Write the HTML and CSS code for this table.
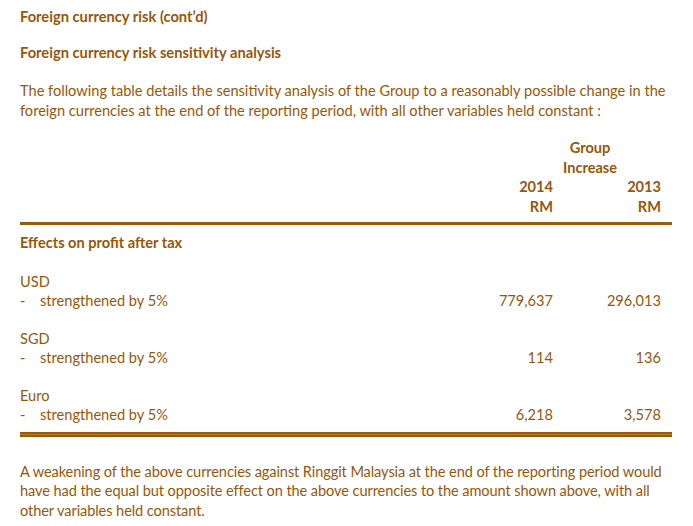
FILE: index.html
```html
<!DOCTYPE html>
<html>
<head>
<meta charset="utf-8">
<link rel="stylesheet" href="styles.css">
</head>
<body>
<div class="page">
  <h1 class="title">Foreign currency risk (cont’d)</h1>
  <h2 class="subtitle">Foreign currency risk sensitivity analysis</h2>
  <p class="para intro">The following table details the sensitivity analysis of the Group to a reasonably possible change in the<br>foreign currencies at the end of the reporting period, with all other variables held constant :</p>

  <div class="table">
    <div class="head">
      <div class="group">Group<br>Increase</div>
      <div class="c2 b">2014<br>RM</div>
      <div class="c3 b">2013<br>RM</div>
    </div>
    <div class="rule"></div>
    <div class="section b">Effects on profit after tax</div>

    <div class="block">
      <div class="cur">USD</div>
      <div class="row"><span class="lbl"><span class="dash">-</span>strengthened by 5%</span><span class="n1">779,637</span><span class="n2">296,013</span></div>
    </div>
    <div class="block">
      <div class="cur">SGD</div>
      <div class="row"><span class="lbl"><span class="dash">-</span>strengthened by 5%</span><span class="n1">114</span><span class="n2">136</span></div>
    </div>
    <div class="block">
      <div class="cur">Euro</div>
      <div class="row"><span class="lbl"><span class="dash">-</span>strengthened by 5%</span><span class="n1">6,218</span><span class="n2">3,578</span></div>
    </div>
    <div class="rule double"></div>
  </div>

  <p class="para outro">A weakening of the above currencies against Ringgit Malaysia at the end of the reporting period would<br>have had the equal but opposite effect on the above currencies to the amount shown above, with all<br>other variables held constant.</p>
</div>
</body>
</html>
```

FILE: styles.css
```css
html, body {
  margin: 0;
  padding: 0;
  background: #ffffff;
}
body {
  font-family: "Lato", "Open Sans", sans-serif;
  font-size: 14.6px;
  line-height: 19.5px;
  color: #96570a;
}
.page {
  width: 652px;
  padding: 6px 0 0 20px;
}
.title, .subtitle {
  font-size: 14.7px;
  font-weight: bold;
  margin: 0;
  line-height: 20px;
}
.subtitle {
  margin-top: 16px;
}
.para {
  margin: 0;
  white-space: nowrap;
}
.intro {
  margin-top: 19px;
}
.b { font-weight: bold; }
.table {
  margin-top: 18px;
}
.head {
  display: grid;
  grid-template-columns: 1fr 90px 108px 11px;
  grid-template-rows: 39px 39px;
}
.group {
  grid-column: 2 / 4;
  grid-row: 1;
  text-align: center;
  padding-left: 56px;
  font-weight: bold;
}
.c2 { grid-column: 2; grid-row: 2; text-align: right; }
.c3 { grid-column: 3; grid-row: 2; text-align: right; }
.rule {
  margin-top: 6px;
  height: 3px;
  background: #9b5a08;
}
.rule.double {
  margin-top: 7px;
  height: 1px;
  background: #b57c34;
  border-top: 2px solid #9b5a08;
  border-bottom: 2px solid #9b5a08;
}
.section {
  margin-top: 8px;
}
.block {
  margin-top: 19px;
}
.block + .block {
  margin-top: 18px;
}
.row {
  display: grid;
  grid-template-columns: 1fr 90px 108px 11px;
}
.dash {
  display: inline-block;
  width: 20px;
}
.n1, .n2 { text-align: right; }
.outro {
  margin-top: 25px;
  letter-spacing: -0.1px;
}
```
